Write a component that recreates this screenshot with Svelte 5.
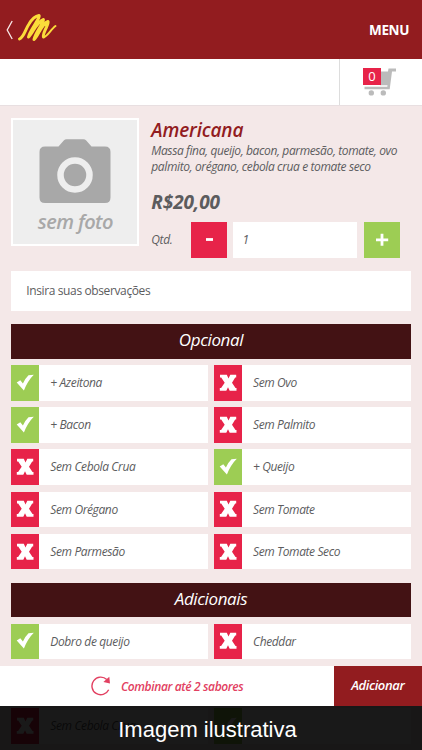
<script lang="ts">
    type Option = { name: string, on: boolean };

    let optional: Option[] = [
        { name: '+ Azeitona', on: true },
        { name: 'Sem Ovo', on: false },
        { name: '+ Bacon', on: true },
        { name: 'Sem Palmito', on: false },
        { name: 'Sem Cebola Crua', on: false },
        { name: '+ Queijo', on: true },
        { name: 'Sem Orégano', on: false },
        { name: 'Sem Tomate', on: false },
        { name: 'Sem Parmesão', on: false },
        { name: 'Sem Tomate Seco', on: false },
    ];

    let extras: Option[] = [
        { name: 'Dobro de queijo', on: true },
        { name: 'Cheddar', on: false },
        { name: '', on: false },
        { name: '', on: true },
        { name: 'Sem Cebola Crua', on: false },
        { name: '', on: true },
    ];

    let groups = [
        { title: 'Opcional', options: optional },
        { title: 'Adicionais', options: extras },
    ];

    let quantity: number = 1;
</script>

<main>
    <header>
        <svg class="back" viewBox="0 0 8 20">
            <path d="M6.2 1 1.2 10l5 9" />
        </svg>
        <svg class="logo" viewBox="0 0 42 32">
            <path d="M2.500 26C7 24 8 17 12 11C15 6 19 3 22 2.500C24 4 13 17 11.500 24C15 22 19 9 26.500 6.500C28 8 18 20 17 26.500C21 24 24 11 31 8.500C33 10 25 20 26.500 24" />
            <path d="M26.500 24C30 24.500 34 16 38.500 13" class="thin" />
        </svg>
        <span class="menu">MENU</span>
    </header>

    <div class="toolbar">
        <div class="cart">
            <svg viewBox="0 0 34 30">
                <path d="M17 4.500h8L25.500 1.500H33v3h-4L26.700 22.300H1.500V19.700H24.300l.2-1.400H17z" />
                <circle cx="8.300" cy="25.900" r="2.700" />
                <circle cx="20.300" cy="25.900" r="2.700" />
            </svg>
            <span class="badge">0</span>
        </div>
    </div>

    <section class="content">
        <div class="product">
            <div class="photo">
                <svg viewBox="0 0 72 64">
                    <path d="M6 7.500h13.500L25 1.200q1-.9 2.500-.9h17q1.500 0 2.500.9l5.500 6.300H66q5.500 0 5.500 5.500v45.500q0 5.500-5.500 5.500H6Q.5 64 .5 58.500V13Q.5 7.500 6 7.500z" />
                    <circle cx="36" cy="36" r="14.500" />
                </svg>
                <span>sem foto</span>
            </div>
            <div class="info">
                <h1>Americana</h1>
                <p class="description">Massa fina, queijo, bacon, parmesão, tomate, ovo<br>palmito, orégano, cebola crua e tomate seco</p>
                <p class="price">R$20,00</p>
                <div class="quantity">
                    <span>Qtd.</span>
                    <button class="minus" aria-label="Menos" on:click={() => quantity = Math.max(1, quantity - 1)}>
                        <svg viewBox="0 0 36 36"><path d="M15 17.500h7" /></svg>
                    </button>
                    <div class="amount">{quantity}</div>
                    <button class="plus" aria-label="Mais" on:click={() => quantity += 1}>
                        <svg viewBox="0 0 36 36"><path d="M12 17.800h12.200M18 11.800v12" /></svg>
                    </button>
                </div>
            </div>
        </div>

        <div class="notes">Insira suas observações</div>

        {#each groups as group}
            <h2>{group.title}</h2>
            <div class="options">
                {#each group.options as option}
                    <div class="option">
                        <div class="mark" class:on={option.on}>
                            {#if option.on}
                                <svg viewBox="0 0 18 18"><path d="M.7 8.600 4.300 6.300 6.900 9.600Q9.500 4 12.500 1.300L17.800.8Q12 6.500 7.900 16.400z" /></svg>
                            {:else}
                                <svg viewBox="0 0 18 18"><path d="M1 .8h6.800L9.500 4.500 11.300.8h5.900v2.700h-1L13 8.700l3.500 5.300h1v2.700h-6.800L9 13.300 7.300 16.700H.8V14h1.300L5.700 8.700 2.200 3.500H1z" /></svg>
                            {/if}
                        </div>
                        <span>{option.name}</span>
                    </div>
                {/each}
            </div>
        {/each}
    </section>

    <footer>
        <div class="combine">
            <svg viewBox="0 0 20 20">
                <path class="arc" d="M17.700 13.700A8.800 8.800 0 1 1 15.800 3.500" />
                <path class="head" d="M18.300.8 19 7.500 12.400 6z" />
            </svg>
            <span>Combinar até 2 sabores</span>
        </div>
        <div class="add">Adicionar</div>
    </footer>

    <div class="caption"><span>Imagem ilustrativa</span></div>
</main>

<style>
    :global(body) {
        margin: 0;
    }

    main {
        position: relative;
        width: 422px;
        height: 750px;
        overflow: hidden;

        display: flex;
        flex-direction: column;

        background-color: #f4e8e8;
        font-family: "Open Sans", sans-serif;
        font-size: 12px;
        letter-spacing: -0.38px;
        color: #5c5c5e;
    }

    main * {
        box-sizing: border-box;
    }

    svg {
        display: block;
        flex-shrink: 0;
    }

    header {
        height: 58.500px;
        flex-shrink: 0;
        display: flex;
        align-items: center;
        padding: 1px 13px 0 6px;

        background-color: #921c1f;
    }

    .back {
        width: 8px;
        height: 20px;
        fill: none;
        stroke: #f8e8e8;
        stroke-width: 1.3;
    }

    .logo {
        width: 42px;
        height: 32px;
        margin: -2px 0 0 3px;
        fill: none;
        stroke: #fbdc3a;
        stroke-width: 3;
        stroke-linecap: round;
        stroke-linejoin: round;
    }

    .logo .thin {
        stroke-width: 2;
    }

    .menu {
        margin: 1px 0 0 auto;
        font-size: 13.500px;
        font-weight: 700;
        color: #fff;
    }

    .toolbar {
        height: 47px;
        flex-shrink: 0;
        display: flex;
        justify-content: flex-end;

        background-color: #fff;
        border-bottom: 1px solid #e8dfe1;
    }

    .cart {
        position: relative;
        width: 83px;
        padding: 8px 0 0 23px;
        border-left: 1px solid #ddd;
    }

    .cart svg {
        width: 34px;
        height: 30px;
        fill: #bbb;
    }

    .badge {
        position: absolute;
        left: 23px;
        top: 9px;
        width: 17.500px;
        height: 17.500px;

        background-color: #e72349;
        color: #fff;
        font-size: 13px;
        line-height: 17px;
        text-align: center;
    }

    .content {
        padding: 12.500px 11.300px 0;
    }

    .product {
        display: flex;
        gap: 12px;
        height: 128px;
    }

    .photo {
        width: 128px;
        height: 128px;
        flex-shrink: 0;
        display: flex;
        flex-direction: column;
        align-items: center;
        padding-top: 19px;

        background-color: #eee;
        border: 2px solid #fff;
        color: #a8a8a8;
        font-size: 20px;
        font-style: italic;
        font-weight: 600;
        letter-spacing: -0.6px;
        line-height: 24px;
    }

    .photo svg {
        width: 72px;
        height: 64px;
        margin-bottom: 7px;
        fill: #a8a8a8;
    }

    .photo circle {
        stroke: #eee;
        stroke-width: 6.500;
    }

    .info {
        flex: 1;
        min-width: 0;
        font-style: italic;
    }

    h1 {
        margin: 0;
        font-size: 19px;
        font-weight: 600;
        letter-spacing: -0.150px;
        line-height: 25px;
        color: #921c1f;
    }

    .description {
        margin: 0;
        line-height: 15.700px;
        white-space: nowrap;
    }

    .price {
        margin: 16px 0 0;
        font-size: 19px;
        font-weight: 700;
        letter-spacing: -0.1px;
        line-height: 25px;
    }

    .quantity {
        display: flex;
        align-items: center;
        margin-top: 6.500px;
        height: 36px;
    }

    .quantity > span {
        width: 39.700px;
    }

    button {
        width: 36px;
        height: 36px;
        padding: 0;
        border: none;
    }

    button svg {
        fill: none;
        stroke: #fff;
        stroke-width: 2.800;
    }

    .minus {
        background-color: #e72349;
    }

    .plus {
        background-color: #9dcd54;
    }

    .amount {
        width: 124px;
        height: 36px;
        margin: 0 6.500px;
        padding-left: 9px;
        line-height: 36px;
        background-color: #fff;
    }

    .notes {
        height: 40px;
        margin-top: 25px;
        padding-left: 15px;
        line-height: 39px;
        background-color: #fff;
    }

    h2 {
        height: 34.500px;
        margin: 13.100px 0 6.500px;

        background-color: #431214;
        color: #fff;
        font-size: 17px;
        font-style: italic;
        font-weight: 400;
        line-height: 32.500px;
        text-align: center;
    }

    .options {
        display: grid;
        grid-template-columns: 1fr 1fr;
        gap: 6.600px 6px;
    }

    .option {
        display: flex;
        height: 35.600px;
        background-color: #fff;
        font-style: italic;
        line-height: 36.500px;
    }

    .mark {
        width: 28px;
        margin-right: 11px;
        display: flex;
        align-items: center;
        justify-content: center;

        background-color: #e72349;
    }

    .mark.on {
        background-color: #9dcd54;
    }

    .mark svg {
        width: 18px;
        height: 18px;
        fill: #fff;
    }

    footer {
        position: absolute;
        left: 0;
        right: 0;
        bottom: 44px;
        height: 40px;

        display: flex;
        background-color: #fff;
        font-style: italic;
        font-weight: 600;
        line-height: 39px;
    }

    .combine {
        flex: 1;
        display: flex;
        align-items: center;
        padding-left: 91px;
        gap: 10px;
        color: #e24061;
    }

    .combine svg {
        width: 20px;
        height: 20px;
    }

    .arc {
        fill: none;
        stroke: #e24061;
        stroke-width: 1.400;
    }

    .head {
        fill: #e24061;
    }

    .add {
        width: 88.500px;
        background-color: #921c1f;
        color: #fff;
        font-size: 13px;
        text-align: center;
    }

    .caption {
        position: absolute;
        left: 0;
        right: 0;
        bottom: 0;
        height: 44px;

        background-color: rgba(0, 0, 0, 0.9);
        color: #fff;
        font-family: "Liberation Sans", sans-serif;
        font-size: 22px;
        letter-spacing: 0;
        line-height: 48px;
        text-align: center;
    }

    .caption span {
        margin-right: 7px;
    }
</style>
